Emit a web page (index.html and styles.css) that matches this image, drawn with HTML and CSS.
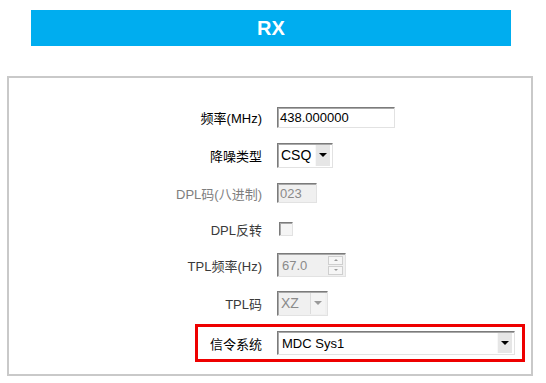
FILE: index.html
```html
<!DOCTYPE html>
<html lang="zh">
<head>
<meta charset="utf-8">
<title>RX</title>
<link rel="stylesheet" href="styles.css">
</head>
<body>
<div class="page">
  <div class="title">RX</div>
  <div class="panel">
    <div class="row">
      <span class="label strong">频率(MHz)</span>
      <span class="field freq">438.000000</span>
    </div>
    <div class="row">
      <span class="label strong">降噪类型</span>
      <span class="field select csq"><span class="value">CSQ</span><span class="drop"><span class="tri"></span></span></span>
    </div>
    <div class="row">
      <span class="label muted">DPL码(八进制)</span>
      <span class="field disabled dpl">023</span>
    </div>
    <div class="row row-check">
      <span class="label">DPL反转</span>
      <span class="check"></span>
    </div>
    <div class="row">
      <span class="label">TPL频率(Hz)</span>
      <span class="field disabled spin"><span class="value">67.0</span><span class="spin-btns"><span class="sb"><span class="up"></span></span><span class="sb"><span class="down"></span></span></span></span>
    </div>
    <div class="row">
      <span class="label">TPL码</span>
      <span class="field select disabled xz"><span class="value">XZ</span><span class="drop"><span class="tri"></span></span></span>
    </div>
    <div class="row signal">
      <span class="label strong">信令系统</span>
      <span class="field select mdc"><span class="value">MDC Sys1</span><span class="drop"><span class="tri"></span></span></span>
    </div>
  </div>
</div>
</body>
</html>
```

FILE: styles.css
```css
html, body {
  margin: 0;
  padding: 0;
  background: #ffffff;
}

body {
  font-family: "Liberation Sans", Arial, "Noto Sans CJK SC", sans-serif;
  font-size: 13px;
  color: #222;
}

.page {
  width: 546px;
  height: 383px;
  overflow: hidden;
  padding-top: 10px;
  box-sizing: border-box;
}

.title {
  margin-left: 31px;
  width: 480px;
  height: 36px;
  background: #00adef;
  color: #ffffff;
  font-weight: bold;
  font-size: 20px;
  display: flex;
  align-items: center;
  justify-content: center;
}

.panel {
  margin-top: 30px;
  margin-left: 7px;
  width: 526px;
  height: 300px;
  box-sizing: border-box;
  border: 2px solid #c9c9c9;
  padding-top: 20px;
  display: flex;
  flex-direction: column;
}

.row {
  display: flex;
  align-items: center;
  height: 38px;
}

.row-check {
  height: 34px;
}

.label {
  width: 253px;
  margin-right: 15px;
  text-align: right;
  color: #3a3a3a;
  white-space: nowrap;
}

.label.strong {
  color: #000;
}

.label.muted {
  color: #7e7e7e;
}

.field {
  box-sizing: border-box;
  display: flex;
  align-items: center;
  background: #ffffff;
  border: 1px solid;
  border-color: #7b7b7b #e2e2e2 #e2e2e2 #7b7b7b;
  box-shadow: inset 1px 1px 0 #a9a9a9;
  padding-left: 2px;
  color: #000;
  font-size: 13px;
}

.field.disabled {
  background: #f0f0f0;
  color: #8a8a8a;
}

.freq {
  width: 118px;
  height: 21px;
}

.dpl {
  width: 40px;
  height: 20px;
}

.select {
  padding-left: 3px;
  padding-right: 2px;
  padding-top: 1px;
  padding-bottom: 1px;
}

.select .value {
  flex: 1;
}

.csq .value,
.xz .value {
  font-size: 14px;
}

.drop {
  width: 15px;
  height: 100%;
  box-sizing: border-box;
  background: #e6e6e6;
  border-left: 1px solid #f8f8f8;
  display: flex;
  align-items: center;
  justify-content: center;
}

.tri {
  width: 0;
  height: 0;
  border-left: 4px solid transparent;
  border-right: 4px solid transparent;
  border-top: 4px solid #000;
}

.disabled .drop {
  background: #f4f4f4;
  border-left: 1px solid #dcdcdc;
}

.disabled .tri {
  border-top-color: #9a9a9a;
}

.csq {
  width: 56px;
  height: 25px;
}

.xz {
  width: 51px;
  height: 25px;
}

.check {
  box-sizing: border-box;
  width: 14px;
  height: 14px;
  margin-left: 2px;
  background: #f5f5f5;
  border: 1px solid;
  border-color: #7b7b7b #e2e2e2 #e2e2e2 #7b7b7b;
  box-shadow: inset 1px 1px 0 #a9a9a9;
}

.spin {
  width: 69px;
  height: 24px;
  padding-left: 4px;
  padding-right: 2px;
}

.spin .value {
  flex: 1;
}

.spin-btns {
  display: flex;
  flex-direction: column;
  width: 15px;
  height: 19px;
  gap: 1px;
}

.sb {
  flex: 1;
  background: #f6f6f6;
  border: 1px solid #cfcfcf;
  display: flex;
  align-items: center;
  justify-content: center;
}

.up {
  width: 0;
  height: 0;
  border-left: 2px solid transparent;
  border-right: 2px solid transparent;
  border-bottom: 2px solid #9a9a9a;
}

.down {
  width: 0;
  height: 0;
  border-left: 2px solid transparent;
  border-right: 2px solid transparent;
  border-top: 2px solid #9a9a9a;
}

.signal {
  margin-top: 2px;
  margin-left: 186px;
  width: 330px;
  height: 38px;
  box-sizing: border-box;
  border: 3px solid #ee0000;
}

.signal .label {
  width: 64px;
  margin-right: 15px;
}

.mdc {
  width: 238px;
  height: 24px;
  padding-left: 4px;
}
```
